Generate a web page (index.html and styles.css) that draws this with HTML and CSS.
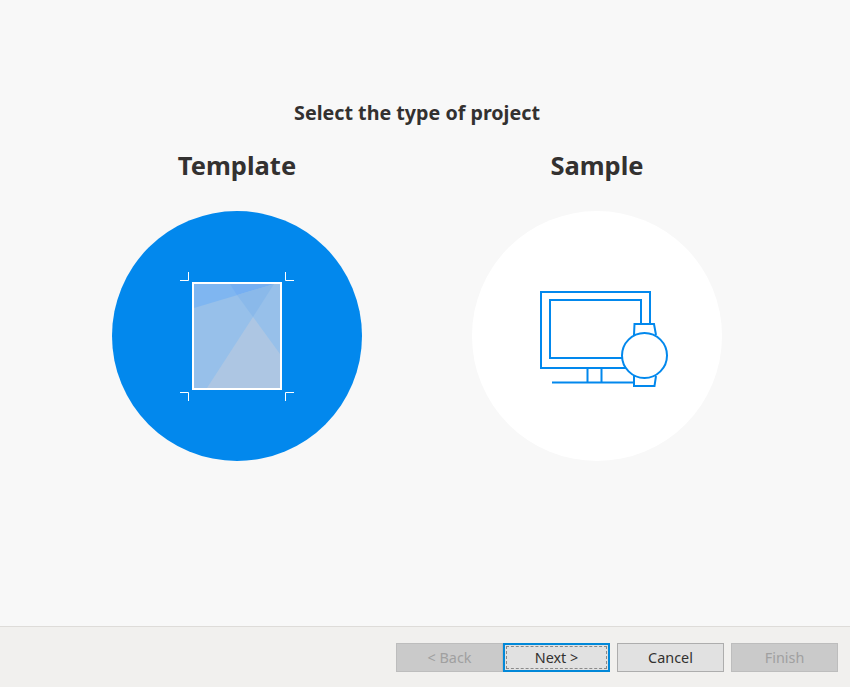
FILE: index.html
```html
<!DOCTYPE html>
<html lang="en">
<head>
<meta charset="utf-8">
<title>Select the type of project</title>
<link rel="stylesheet" href="styles.css">
</head>
<body>
<div class="wizard">
  <main class="content">
    <h1 class="title">Select the type of project</h1>
    <div class="choices">
      <section class="choice">
        <h2 class="choice-name">Template</h2>
        <div class="disc disc-selected">
          <svg class="art" viewBox="112 211 250 250" aria-hidden="true">
            <polygon points="194,284 280,284 280,388 194,388" fill="#97c0ea"/>
            <polygon points="194,284 274,284 194,308" fill="#7fb6f1"/>
            <polygon points="230,284 274,284 237,295" fill="#76aff2"/>
            <polygon points="237,295 274,284 253,317" fill="#8ab9ea"/>
            <polygon points="253,317 280,354 280,388 207,388" fill="#adc6e3"/>
            <rect x="193" y="283" width="88" height="106" fill="none" stroke="#fff" stroke-width="2"/>
            <path d="M180 280.500H188.500V272M285.500 272V280.500H294M180 392.500H188.500V401M285.500 401V392.500H294" fill="none" stroke="#fff"/>
          </svg>
        </div>
      </section>
      <section class="choice">
        <h2 class="choice-name">Sample</h2>
        <div class="disc">
          <svg class="art" viewBox="472 211 250 250" aria-hidden="true">
            <g fill="none" stroke="#0288ed" stroke-width="2">
              <rect x="541" y="292" width="109" height="76"/>
              <rect x="550" y="300" width="91" height="58"/>
              <path d="M587.500 368V382M601.500 368V382M552 382.500H636"/>
              <path d="M634 335L634.500 324H654L656 335M634 376L634 386H654.500L656 376" fill="#fff"/>
              <circle cx="644.500" cy="355.500" r="22.500" fill="#fff"/>
            </g>
          </svg>
        </div>
      </section>
    </div>
  </main>
  <footer class="actions">
    <div class="joined">
      <button class="btn" disabled>&lt; Back</button>
      <button class="btn btn-default"><span class="focus-ring">Next &gt;</span></button>
    </div>
    <button class="btn">Cancel</button>
    <button class="btn" disabled>Finish</button>
  </footer>
</div>
</body>
</html>
```
FILE: styles.css
```css
* { box-sizing: border-box; }
html, body { margin: 0; height: 100%; }
body {
  font-family: "Noto Sans", "Open Sans", sans-serif;
  color: #333130;
  background: #f8f8f8;
}
.wizard {
  width: 850px;
  height: 687px;
  display: flex;
  flex-direction: column;
}
.content {
  height: 626px;
  padding-top: 99px;
  background: #f8f8f8;
  overflow: hidden;
}
.title {
  margin: 0 0 0 -16px;
  text-align: center;
  font-size: 19.7px;
  line-height: 28px;
  font-weight: 700;
}
.choices {
  display: flex;
  gap: 110px;
  padding: 21px 0 0 112px;
}
.choice {
  width: 250px;
}
.choice-name {
  margin: 0 0 29px;
  text-align: center;
  font-size: 25.5px;
  line-height: 34px;
  font-weight: 700;
}
.disc {
  width: 250px;
  height: 250px;
  border-radius: 50%;
  background: #fff;
}
.disc-selected {
  background: #0288ed;
}
.art {
  display: block;
  width: 250px;
  height: 250px;
}
.actions {
  flex: 1;
  display: flex;
  justify-content: flex-end;
  align-items: flex-start;
  gap: 7px;
  padding: 16px 12px 0 0;
  background: #f1f0ee;
  border-top: 1px solid #dedcd9;
}
.joined {
  display: flex;
}
.btn {
  width: 107px;
  height: 29px;
  padding: 0;
  font-family: inherit;
  font-size: 14.4px;
  color: #333130;
  background: #e1e1e1;
  border: 1px solid #adadad;
}
.btn:disabled {
  color: #a0a0a0;
  background: #cacaca;
  border-color: #bdbdbd;
}
.btn-default {
  padding: 1px;
  border: 2px solid #0288d8;
}
.focus-ring {
  display: flex;
  align-items: center;
  justify-content: center;
  height: 100%;
  border: 1px dashed #8a8a8a;
}
```
